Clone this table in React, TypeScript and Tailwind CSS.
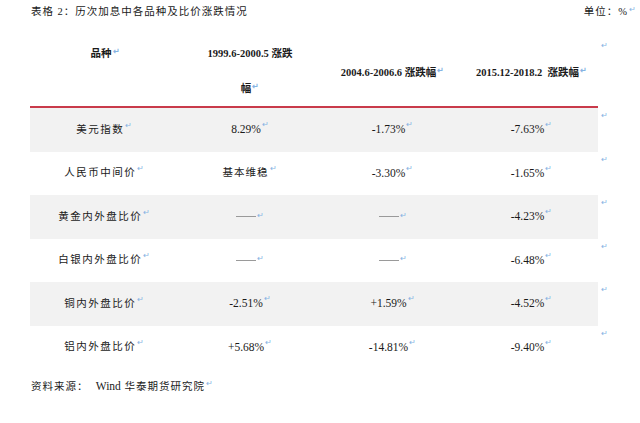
import React from "react";

const cjk = "font-['Liberation_Serif','Noto_Sans_CJK_SC',serif]";

function Mark({ className = "" }: { className?: string }) {
  return (
    <span className={`ml-[1px] inline-block align-top text-[8px] leading-[8px] text-[#86b3e3] ${className}`}>
      ↵
    </span>
  );
}

function Dash() {
  return (
    <span className="inline-flex items-center">
      <span className="inline-block h-px w-[20px] bg-[#9a9a9a]" />
      <Mark className="-mt-[2px]" />
    </span>
  );
}

type Cell = string | null;

const rows: { name: string; cells: Cell[] }[] = [
  { name: "美元指数", cells: ["8.29%", "-1.73%", "-7.63%"] },
  { name: "人民币中间价", cells: ["基本维稳", "-3.30%", "-1.65%"] },
  { name: "黄金内外盘比价", cells: [null, null, "-4.23%"] },
  { name: "白银内外盘比价", cells: [null, null, "-6.48%"] },
  { name: "铜内外盘比价", cells: ["-2.51%", "+1.59%", "-4.52%"] },
  { name: "铝内外盘比价", cells: ["+5.68%", "-14.81%", "-9.40%"] },
];

const colW = ["w-[150px]", "w-[140px]", "w-[145px]", "w-[133px]"];

function Value({ v }: { v: Cell }) {
  if (v === null) return <Dash />;
  const isCjk = /[\u4e00-\u9fff]/.test(v);
  return (
    <span className={isCjk ? "text-[10.5px] tracking-[1px]" : "text-[11.5px]"}>
      {v}
      <Mark />
    </span>
  );
}

export default function App() {
  return (
    <div className={`relative h-[423px] w-[640px] overflow-hidden bg-white text-[#1a1a1a] ${cjk}`}>
      {/* title */}
      <div className="flex h-[30px] justify-between pl-[31px] pr-[3px] pt-[6px] text-[10.5px] leading-[12px] tracking-[1px]">
        <span>表格 2：历次加息中各品种及比价涨跌情况</span>
        <span>
          单位：%
          <Mark />
        </span>
      </div>

      {/* header */}
      <div className="flex">
        <div className="ml-[30px] flex h-[76px] w-[568px] text-[10.5px] font-bold leading-[12px]">
          <div className={`${colW[0]} pt-[18px] text-center`}>
            品种
            <Mark />
          </div>
          <div className={`${colW[1]} flex flex-col items-center pt-[18px]`}>
            <span>1999.6-2000.5 涨跌</span>
            <span className="mt-[23px]">
              幅
              <Mark />
            </span>
          </div>
          <div className={`${colW[2]} pt-[37px] text-center`}>
            2004.6-2006.6 涨跌幅
            <Mark />
          </div>
          <div className={`${colW[3]} pt-[37px] text-center`}>
            2015.12-2018.2&nbsp; 涨跌幅
            <Mark />
          </div>
        </div>
        <div className="pl-[2px] pt-[12px]">
          <Mark />
        </div>
      </div>
      <div className="ml-[30px] h-[2px] w-[568px] bg-[#c93a4b]" />

      {/* rows */}
      {rows.map((r, i) => (
        <div key={r.name} className="flex">
          <div
            className={`ml-[30px] flex h-[43.5px] w-[568px] items-center ${
              i % 2 === 0 ? "bg-[#f2f2f2]" : "bg-white"
            }`}
          >
            <div className={`${colW[0]} text-center text-[10.5px] tracking-[1.5px]`}>
              {r.name}
              <Mark />
            </div>
            {r.cells.map((c, j) => (
              <div key={j} className={`${colW[j + 1]} flex justify-center`}>
                <Value v={c} />
              </div>
            ))}
          </div>
          <div className="pl-[2px] pt-[4px]">
            <Mark />
          </div>
        </div>
      ))}

      {/* source */}
      <div className="ml-[31px] mt-[11px] text-[10.5px] leading-[12px] tracking-[1px]">
        资料来源：&nbsp; <span className="tracking-normal text-[11.5px]">Wind</span> 华泰期货研究院
        <Mark />
      </div>
    </div>
  );
}
